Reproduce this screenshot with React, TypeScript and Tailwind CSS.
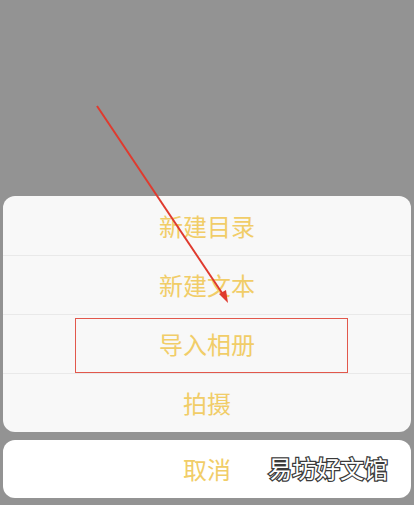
export default function App() {
  const items = ['新建目录', '新建文本', '导入相册', '拍摄'];

  return (
    <div className="relative flex h-[505px] w-full flex-col justify-end gap-[8px] overflow-hidden bg-[#939393] px-[3px] pb-[7px] font-['Noto_Sans_CJK_SC',sans-serif]">
      <div className="overflow-hidden rounded-[12px] bg-[#f8f8f8]">
        {items.map((label, i) => (
          <div
            key={label}
            className={`relative flex h-[59px] items-center justify-center text-[24px] text-[#f1cd68] ${i > 0 ? 'border-t border-[#e9e9e9]' : ''}`}
          >
            {label}
            {i === 2 && (
              <div className="absolute left-[72px] top-[3px] h-[55px] w-[273px] border-[1.5px] border-[#e2584c]" />
            )}
          </div>
        ))}
      </div>

      <div className="relative flex h-[58px] items-center justify-center rounded-[12px] bg-white text-[24px] text-[#f1cd68]">
        取消
        <span className="absolute left-[265px] top-[10px] text-[24px] text-white [-webkit-text-stroke:2.5px_#3a3a3a] [paint-order:stroke_fill]">
          易坊好文馆
        </span>
      </div>

      <svg className="pointer-events-none absolute left-0 top-0" width="414" height="505" viewBox="0 0 414 505">
        <line x1="97" y1="106" x2="224" y2="296" stroke="#e03a2e" strokeWidth="2" />
        <polygon points="228,303 219,294 226,290" fill="#e03a2e" />
      </svg>
    </div>
  );
}
